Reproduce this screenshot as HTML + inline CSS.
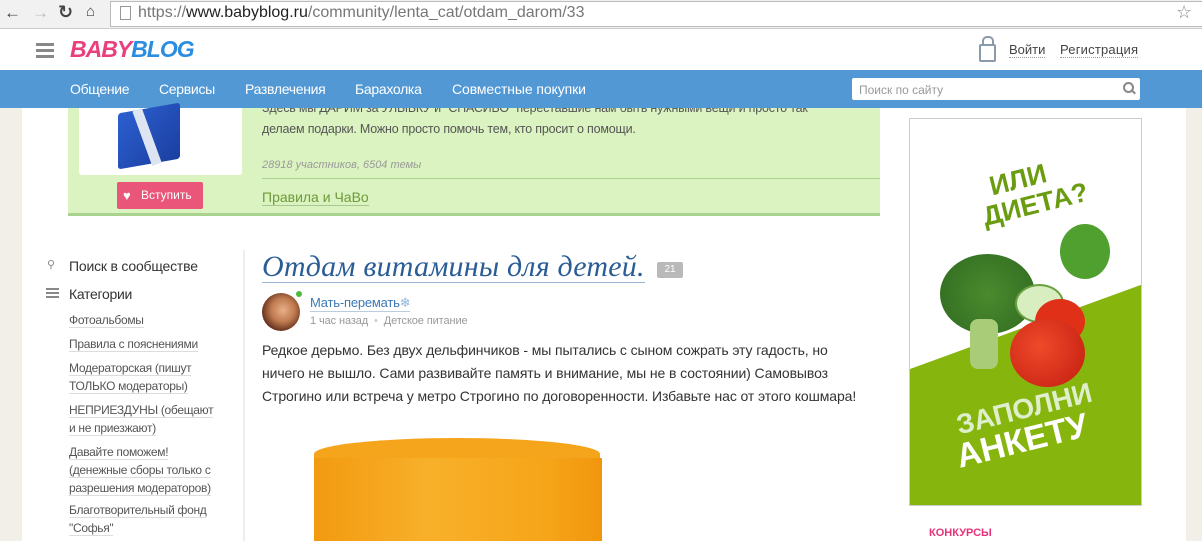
<!DOCTYPE html>
<html><head><meta charset="utf-8"><style>
body{margin:0;width:1202px;height:541px;overflow:hidden;position:relative;font-family:"Liberation Sans","DejaVu Sans",sans-serif;background:#fff}
.a{position:absolute}
.l{color:#555;font-size:12px;line-height:18px;border-bottom:1px solid #ddd}
</style></head><body>
<div class="a" style="left:0;top:0;width:1202px;height:28px;background:#f1f1f1;border-bottom:1px solid #ccc"></div>
<div class="a" style="left:4px;top:3px;font-size:17px;color:#444">&#8592;</div>
<div class="a" style="left:32px;top:3px;font-size:17px;color:#bbb">&#8594;</div>
<div class="a" style="left:58px;top:2px;font-size:18px;color:#444;font-weight:bold">&#8635;</div>
<div class="a" style="left:86px;top:3px;font-size:15px;color:#444">&#8962;</div>
<div class="a" style="left:110px;top:1px;width:1092px;height:24px;background:#fff;border:1px solid #bbb"></div>
<div class="a" style="left:120px;top:6px;width:9px;height:12px;border:1px solid #999"></div>
<div class="a" style="left:138px;top:4px;font-size:16px;color:#777">https://<span style="color:#222">www.babyblog.ru</span>/community/lenta_cat/otdam_darom/33</div>
<div class="a" style="left:1176px;top:2px;font-size:18px;color:#888">&#9734;</div>
<div class="a" style="left:0;top:108px;width:22px;height:433px;background:#f2efe8"></div>
<div class="a" style="left:1186px;top:108px;width:16px;height:433px;background:#f2efe8"></div>
<div class="a" style="left:36px;top:43px;width:18px;height:3px;background:#888;box-shadow:0 6px 0 #888,0 12px 0 #888"></div>
<div class="a" style="left:70px;top:36px;font-size:23px;font-weight:bold;font-style:italic;letter-spacing:-1px"><span style="color:#ea3f7d">BABY</span><span style="color:#2a8de0">BLOG</span></div>
<div class="a" style="left:979px;top:44px;width:13px;height:14px;border:2px solid #8a9aaa;border-radius:2px"></div>
<div class="a" style="left:982px;top:36px;width:8px;height:8px;border:2px solid #8a9aaa;border-bottom:none;border-radius:5px 5px 0 0"></div>
<div class="a" style="left:1009px;top:42px;font-size:13px;color:#444;border-bottom:1px dotted #999">Войти</div>
<div class="a" style="left:1060px;top:42px;font-size:13px;color:#444;border-bottom:1px dotted #999;letter-spacing:0.2px">Регистрация</div>
<div class="a" style="left:0;top:70px;width:1202px;height:38px;background:#5298d4"></div>
<div class="a" style="left:70px;top:81px;font-size:14px;color:#fff;letter-spacing:-0.3px">Общение</div>
<div class="a" style="left:159px;top:81px;font-size:14px;color:#fff;letter-spacing:-0.3px">Сервисы</div>
<div class="a" style="left:245px;top:81px;font-size:14px;color:#fff;letter-spacing:-0.3px">Развлечения</div>
<div class="a" style="left:355px;top:81px;font-size:14px;color:#fff;letter-spacing:-0.3px">Барахолка</div>
<div class="a" style="left:452px;top:81px;font-size:14px;color:#fff;letter-spacing:-0.1px">Совместные покупки</div>
<div class="a" style="left:852px;top:78px;width:288px;height:22px;background:#fff;border-radius:2px"></div>
<div class="a" style="left:859px;top:83px;font-size:12px;color:#999">Поиск по сайту</div>
<div class="a" style="left:1123px;top:82px;width:7px;height:7px;border:2px solid #888;border-radius:50%"></div>
<div class="a" style="left:1131px;top:91px;width:5px;height:2px;background:#888;transform:rotate(45deg)"></div>
<div class="a" style="left:68px;top:108px;width:812px;height:105px;background:#dbf3c0;border-bottom:3px solid #a9d28e"></div>
<div class="a" style="left:79px;top:108px;width:163px;height:67px;background:#fff;border-radius:0 0 3px 3px"></div>
<div class="a" style="left:118px;top:108px;width:62px;height:56px;background:linear-gradient(135deg,#2c5fd0,#1b3fa0);transform:skewY(-10deg);border-radius:3px"></div>
<div class="a" style="left:142px;top:108px;width:10px;height:58px;background:#dde4f2;transform:rotate(-20deg)"></div>
<div class="a" style="left:117px;top:182px;width:86px;height:27px;background:#ea567a;border-radius:2px"></div>
<div class="a" style="left:123px;top:188px;font-size:13px;color:#fff">&#9829;</div>
<div class="a" style="left:141px;top:188px;font-size:12px;color:#fff">Вступить</div>
<div class="a" style="left:262px;top:98px;font-size:12.5px;color:#555;line-height:21px;letter-spacing:-0.2px;clip-path:inset(10px 0 0 0)">Здесь мы ДАРИМ за УЛЫБКУ и "СПАСИБО" переставшие нам быть нужными вещи и просто так<br>делаем подарки. Можно просто помочь тем, кто просит о помощи.</div>
<div class="a" style="left:262px;top:159px;font-size:11px;color:#999;font-style:italic">28918 участников, 6504 темы</div>
<div class="a" style="left:262px;top:178px;width:618px;height:1px;background:#a9d28e"></div>
<div class="a" style="left:262px;top:189px;font-size:14px;color:#6e9a3a;border-bottom:1px solid #a9c88e">Правила и ЧаВо</div>
<div class="a" style="left:47px;top:258px;font-size:11px;color:#888">&#9906;</div>
<div class="a" style="left:69px;top:258px;font-size:14px;color:#333;letter-spacing:-0.2px">Поиск в сообществе</div>
<div class="a" style="left:46px;top:288px;width:13px;height:2px;background:#888;box-shadow:0 4px 0 #888,0 8px 0 #888"></div>
<div class="a" style="left:69px;top:286px;font-size:14px;color:#333;letter-spacing:-0.3px">Категории</div>
<div class="a" style="left:69px;top:311px;letter-spacing:-0.3px"><span class="l">Фотоальбомы</span></div>
<div class="a" style="left:69px;top:335px;letter-spacing:-0.3px"><span class="l">Правила с пояснениями</span></div>
<div class="a" style="left:69px;top:359px;letter-spacing:-0.3px;line-height:18px"><span class="l">Модераторская (пишут</span><br><span class="l">ТОЛЬКО модераторы)</span></div>
<div class="a" style="left:69px;top:401px;letter-spacing:-0.3px;line-height:18px"><span class="l">НЕПРИЕЗДУНЫ (обещают</span><br><span class="l">и не приезжают)</span></div>
<div class="a" style="left:69px;top:443px;letter-spacing:-0.3px;line-height:18px"><span class="l">Давайте поможем!</span><br><span class="l">(денежные сборы только с</span><br><span class="l">разрешения модераторов)</span></div>
<div class="a" style="left:69px;top:501px;letter-spacing:-0.3px;line-height:18px"><span class="l">Благотворительный фонд</span><br><span class="l">"Софья"</span></div>
<div class="a" style="left:243px;top:250px;width:2px;height:291px;background:#eee"></div>
<div class="a" style="left:262px;top:251px;font-family:'Liberation Serif',serif;font-style:italic;font-size:30px;letter-spacing:0.2px;color:#2a5d95;border-bottom:1px solid #9bb6d4;line-height:31px">Отдам витамины для детей.</div>
<div class="a" style="left:657px;top:262px;width:26px;height:16px;background:#b9b9b9;color:#fff;font-size:10px;text-align:center;line-height:16px;border-radius:2px">21</div>
<div class="a" style="left:262px;top:293px;width:38px;height:38px;border-radius:50%;background:radial-gradient(circle at 55% 45%,#e8b08a 0,#c07a50 40%,#5a2a18 75%)"></div>
<div class="a" style="left:296px;top:291px;width:6px;height:6px;border-radius:50%;background:#4cbb3f"></div>
<div class="a" style="left:310px;top:295px;font-size:13px;color:#3e78b6;border-bottom:1px solid #bcd;letter-spacing:-0.2px">Мать-перемать<span style="color:#8ab4e0">&#10052;</span></div>
<div class="a" style="left:310px;top:315px;font-size:11px;color:#999;letter-spacing:-0.1px">1 час назад &nbsp;<span style="color:#ccc">•</span>&nbsp; Детское питание</div>
<div class="a" style="left:262px;top:339px;width:640px;font-size:14px;color:#333;line-height:23px;letter-spacing:-0.1px">Редкое дерьмо. Без двух дельфинчиков - мы пытались с сыном сожрать эту гадость, но<br>ничего не вышло. Сами развивайте память и внимание, мы не в состоянии) Самовывоз<br>Строгино или встреча у метро Строгино по договоренности. Избавьте нас от этого кошмара!</div>
<div class="a" style="left:314px;top:438px;width:286px;height:40px;border-radius:50%/40%;background:#f5a51b"></div>
<div class="a" style="left:314px;top:458px;width:288px;height:83px;background:linear-gradient(90deg,#f29a10,#f8b02a 40%,#f6a519 80%,#f0960d)"></div>
<div class="a" style="left:909px;top:118px;width:231px;height:386px;border:1px solid #ccc;background:#fff;overflow:hidden">
<div class="a" style="left:0;top:250px;width:240px;height:300px;background:#86b50d;transform:skewY(-20deg);transform-origin:0 0"></div>
<div class="a" style="left:82px;top:42px;font-size:27px;font-weight:bold;color:#6a9c10;line-height:28px;transform:rotate(-14deg)">ИЛИ<br><span style="margin-left:-14px">ДИЕТА?</span></div>
<div class="a" style="left:30px;top:135px;width:95px;height:80px;border-radius:50%;background:radial-gradient(circle,#4c8a2e,#2e6a20)"></div>
<div class="a" style="left:60px;top:200px;width:28px;height:50px;background:#a9cc78;border-radius:8px"></div>
<div class="a" style="left:105px;top:165px;width:45px;height:35px;border-radius:50%;background:#d9eec0;border:2px solid #6aa040"></div>
<div class="a" style="left:125px;top:180px;width:50px;height:45px;border-radius:50%;background:#e03018"></div>
<div class="a" style="left:100px;top:200px;width:75px;height:68px;border-radius:50%;background:radial-gradient(circle at 40% 40%,#ef4a2a,#c21c10)"></div>
<div class="a" style="left:150px;top:105px;width:50px;height:55px;border-radius:50%;background:#4fa02e"></div>
<div class="a" style="left:45px;top:275px;font-size:28px;font-weight:bold;color:#dfeecb;line-height:30px;transform:rotate(-14deg)">ЗАПОЛНИ</div>
<div class="a" style="left:45px;top:305px;font-size:34px;font-weight:bold;color:#fff;line-height:34px;transform:rotate(-14deg)">АНКЕТУ</div>
</div>
<div class="a" style="left:929px;top:527px;font-size:11px;font-weight:bold;color:#e6327a">КОНКУРСЫ</div>
</body></html>
